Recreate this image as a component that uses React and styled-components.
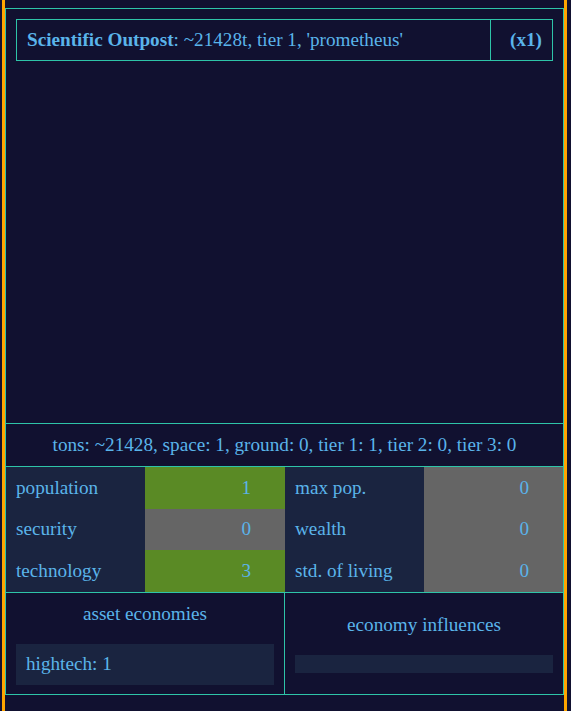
import styled, { createGlobalStyle } from 'styled-components'

const GlobalStyle = createGlobalStyle`
  html, body {
    margin: 0;
    padding: 0;
    background: #111130;
  }
  body {
    font-family: "Liberation Serif", "Times New Roman", serif;
    font-size: 19.2px;
    color: #5ab4ea;
  }
`;

const Frame = styled.div`
  margin-left: 2px;
  width: 559px;
  min-height: 100vh;
  padding-top: 8px;
  border-left: 3px solid #ffa500;
  border-right: 3px solid #ffa500;
  box-sizing: content-box;
`;

const Panel = styled.div`
  border: 1px solid #2ec4a8;
  display: flex;
  flex-direction: column;
`;

const AssetList = styled.div`
  height: 414px;
  padding: 10px;
  box-sizing: border-box;
`;

const AssetRow = styled.div`
  display: grid;
  grid-template-columns: 1fr 62px;
  border: 1px solid #2ec4a8;
  line-height: 22px;
`;

const AssetCell = styled.div`
  padding: 9px 10px;
  text-align: ${p => (p.$right ? 'right' : 'left')};
  font-weight: ${p => (p.$right ? 700 : 400)};
  border-left: ${p => (p.$right ? '1px solid #2ec4a8' : 'none')};
`;

const Summary = styled.div`
  border-top: 1px solid #2ec4a8;
  height: 42px;
  display: flex;
  align-items: center;
  justify-content: center;
`;

const StatsGrid = styled.div`
  border-top: 1px solid #2ec4a8;
  display: grid;
  grid-template-columns: 139px 140px 139px 139px;
  grid-auto-rows: 41.67px;
`;

const StatLabel = styled.div`
  background: #1a2440;
  display: flex;
  align-items: center;
  padding: 0 10px;
`;

const StatValue = styled.div`
  background: ${p => (p.$positive ? '#5a8a25' : '#656565')};
  display: flex;
  align-items: center;
  justify-content: flex-end;
  padding: 0 34px 0 10px;
`;

const Economies = styled.div`
  border-top: 1px solid #2ec4a8;
  display: grid;
  grid-template-columns: 1fr 1px 1fr;
  height: 101px;
`;

const Divider = styled.div`
  background: #2ec4a8;
`;

const EconomyColumn = styled.div`
  padding: 10px;
  display: flex;
  flex-direction: column;
  justify-content: center;
  gap: 19px;
`;

const EconomyTitle = styled.div`
  text-align: center;
  line-height: 22px;
`;

const EconomyBox = styled.div`
  background: #1a2440;
  min-height: 18px;
  padding: ${p => (p.$empty ? '0' : '9.5px 10px')};
  line-height: 22px;
`;

const stats = [
  ['population', 1, true],
  ['max pop.', 0, false],
  ['security', 0, false],
  ['wealth', 0, false],
  ['technology', 3, true],
  ['std. of living', 0, false],
];

const App = () => {
  return <>
    <GlobalStyle />
    <Frame>
      <Panel>
        <AssetList>
          <AssetRow>
            <AssetCell><b>Scientific Outpost</b>: ~21428t, tier 1, 'prometheus'</AssetCell>
            <AssetCell $right>(x1)</AssetCell>
          </AssetRow>
        </AssetList>
        <Summary>tons: ~21428, space: 1, ground: 0, tier 1: 1, tier 2: 0, tier 3: 0</Summary>
        <StatsGrid>
          {stats.map(([label, value, positive]) => [
            <StatLabel key={label + '-l'}>{label}</StatLabel>,
            <StatValue key={label + '-v'} $positive={positive}>{value}</StatValue>
          ])}
        </StatsGrid>
        <Economies>
          <EconomyColumn>
            <EconomyTitle>asset economies</EconomyTitle>
            <EconomyBox>hightech: 1</EconomyBox>
          </EconomyColumn>
          <Divider />
          <EconomyColumn>
            <EconomyTitle>economy influences</EconomyTitle>
            <EconomyBox $empty />
          </EconomyColumn>
        </Economies>
      </Panel>
    </Frame>
  </>
}

export default App
